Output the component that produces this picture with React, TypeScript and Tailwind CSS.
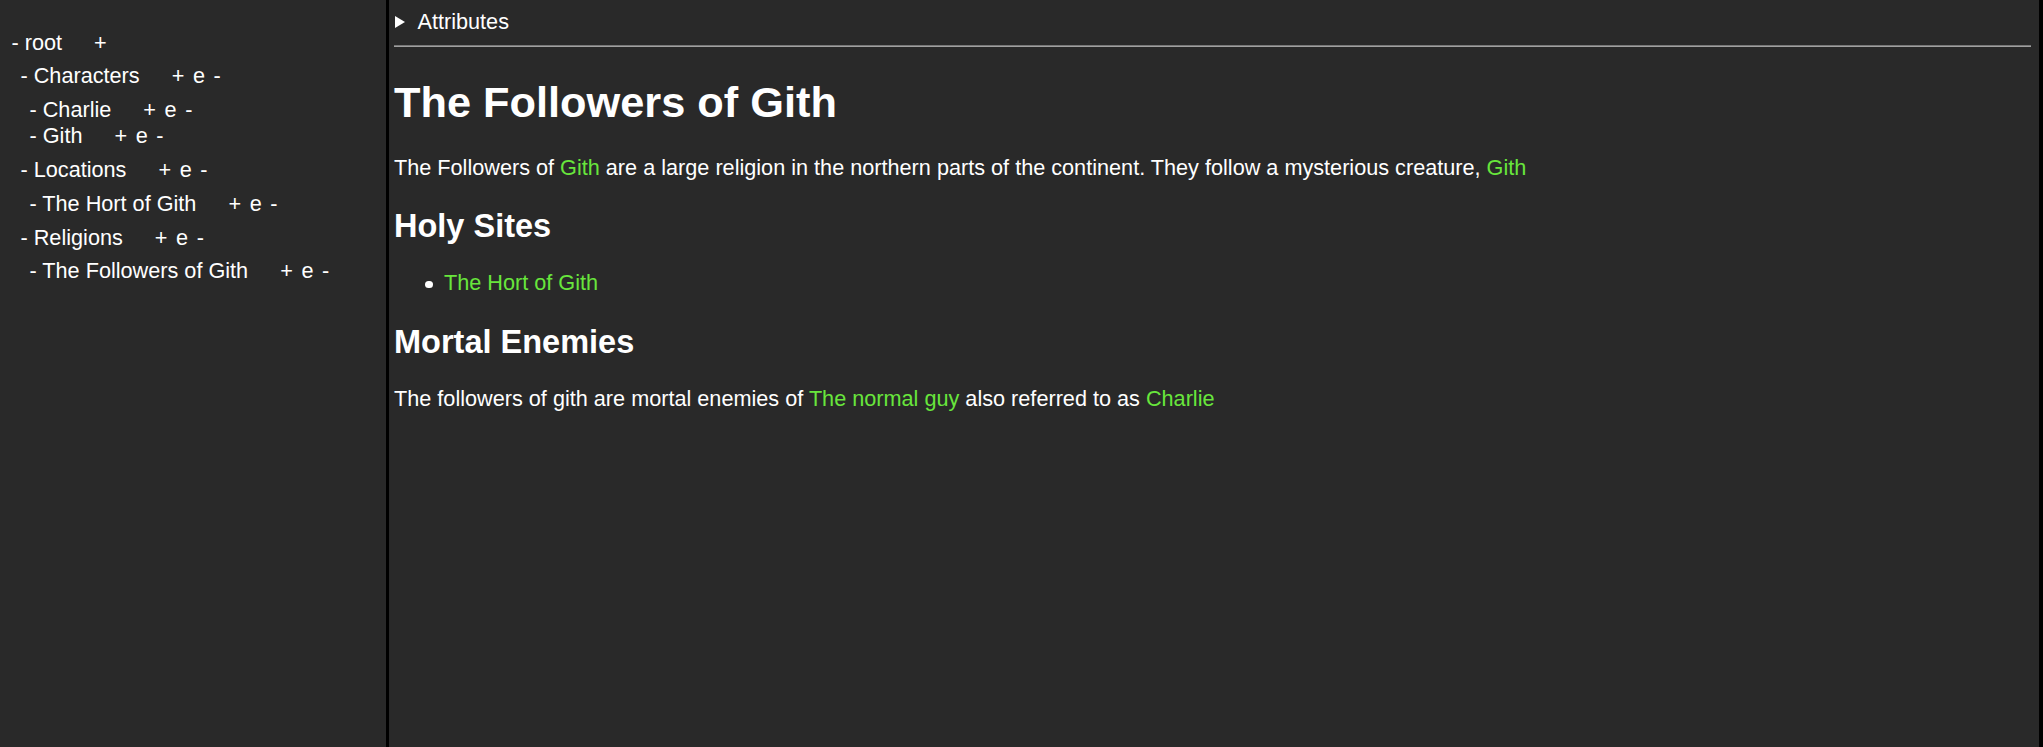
import React from 'react';

type TreeNode = {
  name: string;
  children?: TreeNode[];
};

const tree: TreeNode = {
  name: 'root',
  children: [
    { name: 'Characters', children: [{ name: 'Charlie' }, { name: 'Gith' }] },
    { name: 'Locations', children: [{ name: 'The Hort of Gith' }] },
    { name: 'Religions', children: [{ name: 'The Followers of Gith' }] },
  ],
};

const Link = ({ children }: { children: React.ReactNode }) => (
  <a className="text-[#68e63c] cursor-pointer">{children}</a>
);

const TreeItem = ({ node, depth }: { node: TreeNode; depth: number }) => {
  const isRoot = depth === 0;
  return (
    <div>
      <div className="flex h-[25.7px] items-center leading-[25.7px] whitespace-nowrap">
        <span>- {node.name}</span>
        <div className="ml-[32px] flex gap-[8.6px]">
          <span className="cursor-pointer">+</span>
          {!isRoot && <span className="cursor-pointer">e</span>}
          {!isRoot && <span className="cursor-pointer">-</span>}
        </div>
      </div>
      {node.children && (
        <div className={isRoot ? 'mt-[8.2px] flex flex-col gap-[8.2px] pl-[9px]' : 'mt-[8.2px] flex flex-col pl-[9px]'}>
          {node.children.map((child) => (
            <TreeItem key={child.name} node={child} depth={depth + 1} />
          ))}
        </div>
      )}
    </div>
  );
};

const App = () => {
  return (
    <div className="flex h-screen w-full bg-[#292929] text-white font-['Liberation_Sans',Arial,sans-serif] text-[21.67px]">
      {/* tree sidebar */}
      <aside className="w-[386px] shrink-0 pt-[29.5px] pl-[11.5px]">
        <TreeItem node={tree} depth={0} />
      </aside>

      {/* page view */}
      <main className="flex-1 border-l-[3px] border-r-4 border-black pt-[10px] pl-[5px] pr-[8px]">
        <div className="flex h-[24px] items-center leading-[24px]">
          <svg width="10" height="12" viewBox="0 0 10 12" className="ml-[1px]">
            <path d="M0 0 L10 6 L0 12 Z" fill="#fff" />
          </svg>
          <span className="ml-[12.5px]">Attributes</span>
        </div>
        <div className="mt-[11px] border-t border-b border-t-[#777777] border-b-[#a0a0a0]" />

        <h1 className="mt-[30.5px] text-[43.33px] leading-[48px] font-bold">The Followers of Gith</h1>
        <p className="mt-[30px] leading-[24px]">
          The Followers of <Link>Gith</Link> are a large religion in the northern parts of the continent. They follow a
          mysterious creature, <Link>Gith</Link>
        </p>

        <h2 className="mt-[28px] text-[32.5px] leading-[36px] font-bold">Holy Sites</h2>
        <ul className="mt-[27.5px]">
          <li className="flex items-start pl-[31px] leading-[24px]">
            <span className="mt-[9.8px] h-[7.5px] w-[7.5px] rounded-full bg-white" />
            <span className="ml-[11.5px]">
              <Link>The Hort of Gith</Link>
            </span>
          </li>
        </ul>

        <h2 className="mt-[29px] text-[32.5px] leading-[36px] font-bold">Mortal Enemies</h2>
        <p className="mt-[27px] leading-[24px]">
          The followers of gith are mortal enemies of <Link>The normal guy</Link> also referred to as <Link>Charlie</Link>
        </p>
      </main>
    </div>
  );
};

export default App;
